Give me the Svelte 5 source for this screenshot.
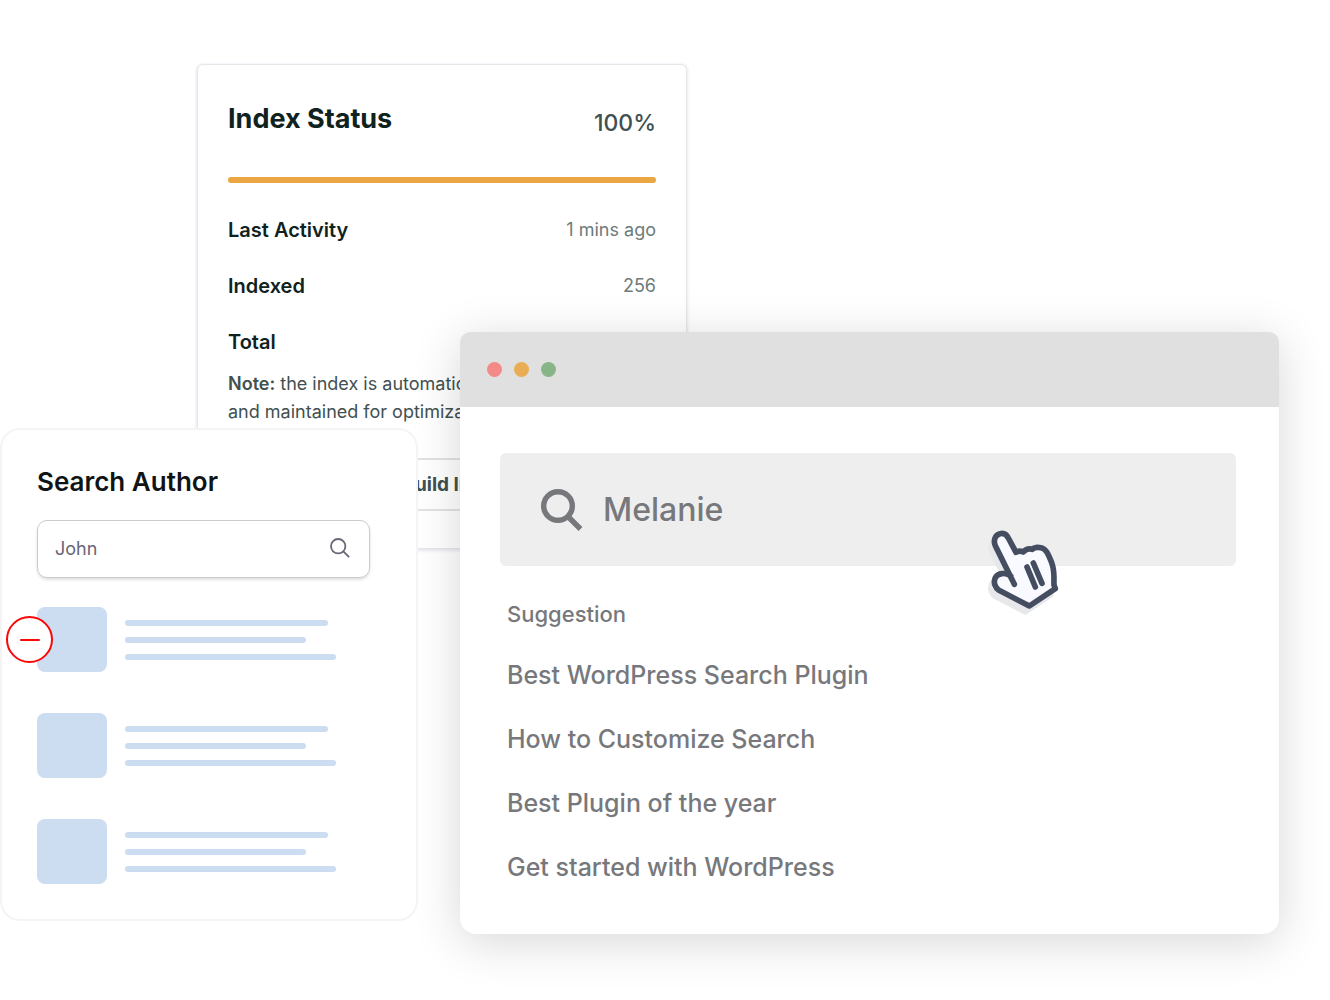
<script>
  const stats = [
    { label: 'Last Activity', value: '1 mins ago' },
    { label: 'Indexed', value: '256' },
    { label: 'Total', value: '256' }
  ];
  const suggestions = [
    'Best WordPress Search Plugin',
    'How to Customize Search',
    'Best Plugin of the year',
    'Get started with WordPress'
  ];
  const results = [1, 2, 3];
  let author = $state('John');
  let query = $state('Melanie');
</script>

<main class="stage">
  <section class="index-card">
    <header class="index-head">
      <h2>Index Status</h2>
      <span class="percent">100%</span>
    </header>
    <div class="progress" role="progressbar" aria-label="Index progress" aria-valuenow="100"></div>
    <dl class="stats">
      {#each stats as stat}
        <div class="stat">
          <dt>{stat.label}</dt>
          <dd>{stat.value}</dd>
        </div>
      {/each}
    </dl>
    <p class="note"><strong>Note:</strong> the index is automatically updated<br />and maintained for optimization.</p>
    <button class="rebuild" type="button">Rebuild Index</button>
  </section>

  <section class="window">
    <div class="titlebar">
      <span class="dot red"></span>
      <span class="dot amber"></span>
      <span class="dot green"></span>
    </div>
    <div class="window-body">
      <div class="search">
        <svg class="search-icon" viewBox="0 0 42 42" aria-hidden="true">
          <circle cx="17" cy="17" r="14.3" />
          <path d="M27 27.5 39.5 40" />
        </svg>
        <input type="text" aria-label="Search" bind:value={query} />
        <svg class="pointer" viewBox="0 0 330 330" aria-hidden="true">
          <path
            class="pointer-shadow"
            transform="translate(-12 19)"
            d="M122 183 77 92C69 76 76 59 90 56C101 53 110 59 115 69L138 112C145 107 154 108 160 111C167 103 178 100 187 103C193 97 203 96 213 98C229 101 236 120 245 143C255 169 251 188 252 210L256 221 178 273 87 226C76 219 69 202 76 188C84 174 106 171 122 183Z"
          />
          <path
            class="pointer-hand"
            d="M133 208 76 92C69 76 76 59 90 56C101 53 110 59 115 69L138 112C145 107 154 108 160 111C167 103 178 100 187 103C193 97 203 96 213 98C229 101 236 120 245 143C255 169 251 188 252 210L256 221 178 273 87 226C76 219 69 202 76 188C84 174 106 171 122 183M171 156 196 216M190 144 216 205"
          />
        </svg>
      </div>
      <h3>Suggestion</h3>
      <ul class="suggestions">
        {#each suggestions as item}
          <li><a href="#search">{item}</a></li>
        {/each}
      </ul>
    </div>
  </section>

  <section class="author-card">
    <h2><label for="author">Search Author</label></h2>
    <div class="field">
      <input id="author" type="text" bind:value={author} />
      <svg viewBox="0 0 20 20" aria-hidden="true">
        <circle cx="8.2" cy="8.2" r="7.2" />
        <path d="m13.6 13.6 5 5" />
      </svg>
    </div>
    <ul class="results">
      {#each results as id}
        <li>
          <span class="thumb"></span>
          <span class="lines">
            <span class="line"></span>
            <span class="line short"></span>
            <span class="line long"></span>
          </span>
          {#if id === 1}
            <button class="remove" type="button" aria-label="Remove"></button>
          {/if}
        </li>
      {/each}
    </ul>
  </section>
</main>

<style>
  :global(body) {
    margin: 0;
    background: #fff;
    font-family: Inter, 'Liberation Sans', sans-serif;
  }
  * {
    box-sizing: border-box;
  }
  h2, h3, p, dl, dd, ul {
    margin: 0;
    padding: 0;
  }
  ul {
    list-style: none;
  }
  input {
    min-width: 0;
    flex: 1;
    padding: 0;
    border: 0;
    outline: 0;
    background: none;
    font-family: inherit;
  }

  .stage {
    display: grid;
    grid-template-columns: 197fr 221fr 42fr 227fr 592fr 51fr;
    align-items: start;
    min-height: 100vh;
    overflow: hidden;
  }
  .stage > section {
    grid-row: 1;
    min-width: 0;
  }

  .index-card {
    grid-column: 2 / 5;
    margin-top: 64px;
    padding: 34px 30px 37px;
    border: 1px solid #e6e7eb;
    border-radius: 6px;
    background: #fff;
    box-shadow: 0 1px 3px 1px #e8e8f2;
  }
  .index-head {
    display: flex;
    justify-content: space-between;
    color: #0f2220;
  }
  .index-head h2 {
    font-size: 27px;
    line-height: 40px;
    font-weight: 700;
  }
  .percent {
    padding-top: 4px;
    color: #415050;
    font-size: 23px;
    line-height: 40px;
    font-weight: 500;
  }
  .progress {
    height: 6px;
    margin: 34px 0 33px;
    border-radius: 3px;
    background: #eaa642;
  }
  .stats {
    display: grid;
    gap: 28px;
  }
  .stat {
    display: flex;
    justify-content: space-between;
    line-height: 28px;
  }
  .stat dt {
    color: #0f2220;
    font-size: 20px;
    font-weight: 600;
  }
  .stat dd {
    color: #6d7b7a;
    font-size: 18px;
  }
  .note {
    margin: 14px 0 32px;
    color: #415050;
    font-size: 18px;
    line-height: 28px;
  }
  .note strong {
    font-weight: 600;
  }
  .rebuild {
    width: 100%;
    height: 53px;
    border: 2px solid #e0e3e3;
    border-radius: 6px;
    background: #fff;
    color: #415050;
    font-family: inherit;
    font-size: 19px;
    font-weight: 700;
  }

  .window {
    grid-column: 4 / 6;
    margin-top: 332px;
    border-radius: 10px 10px 16px 16px;
    background: #fff;
    box-shadow: 0 8px 48px rgba(0, 0, 0, 0.16);
    color: #77787c;
  }
  .titlebar {
    display: flex;
    align-items: center;
    gap: 12px;
    height: 75px;
    padding: 0 27px;
    border-radius: 10px 10px 0 0;
    background: #e0e0e0;
  }
  .dot {
    width: 15px;
    height: 15px;
    border-radius: 50%;
  }
  .red {
    background: #f48a88;
  }
  .amber {
    background: #e8ad55;
  }
  .green {
    background: #87b588;
  }
  .window-body {
    padding: 46px 43px 35px 40px;
  }
  .search {
    position: relative;
    display: flex;
    align-items: center;
    gap: 20px;
    height: 113px;
    padding: 0 41px;
    border-radius: 6px;
    background: #eee;
  }
  .search input {
    height: 60px;
    color: inherit;
    font-size: 32px;
    font-weight: 500;
  }
  .search-icon {
    width: 42px;
    height: 42px;
    fill: none;
    stroke: #77787c;
    stroke-width: 5.4;
  }
  .pointer {
    position: absolute;
    top: 62px;
    right: 156px;
    width: 110px;
    height: 110px;
  }
  .pointer-shadow {
    fill: #e6e8ea;
    stroke: #e6e8ea;
    stroke-width: 14;
    stroke-linejoin: round;
  }
  .pointer-hand {
    fill: #f8faff;
    stroke: #454d61;
    stroke-width: 17;
    stroke-linecap: round;
    stroke-linejoin: round;
  }
  .window-body h3 {
    padding: 32px 7px 0;
    font-size: 22px;
    line-height: 32px;
    font-weight: 500;
  }
  .suggestions {
    padding: 13px 7px 0;
  }
  .suggestions a {
    color: inherit;
    font-size: 25px;
    line-height: 64px;
    font-weight: 500;
    text-decoration: none;
  }

  .author-card {
    grid-column: 1 / 3;
    margin-top: 428px;
    padding: 32px 46px 35px 35px;
    border: 2px solid #f4f4f4;
    border-radius: 20px;
    background: #fff;
    z-index: 1;
  }
  .author-card h2 {
    color: #111414;
    font-size: 26px;
    line-height: 40px;
    font-weight: 600;
  }
  .field {
    display: flex;
    align-items: center;
    height: 58px;
    margin: 18px 0 29px;
    padding: 0 19px 2px 17px;
    border: 1px solid #cbcbcd;
    border-radius: 10px;
    box-shadow: 0 2px 3px rgba(0, 0, 0, 0.12);
  }
  .field input {
    height: 40px;
    color: #6a6476;
    font-size: 18px;
  }
  .field svg {
    width: 20px;
    height: 20px;
    fill: none;
    stroke: #6a6476;
    stroke-width: 1.8;
    stroke-linecap: round;
  }
  .results {
    display: grid;
    gap: 41px;
  }
  .results li {
    position: relative;
    display: flex;
    align-items: center;
    gap: 18px;
  }
  .thumb {
    width: 70px;
    height: 65px;
    border-radius: 8px;
    background: #ccdcf1;
  }
  .lines {
    display: grid;
    gap: 11px;
    flex: 1;
  }
  .line {
    width: 83%;
    height: 6px;
    border-radius: 3px;
    background: #ccdcf1;
  }
  .short {
    width: 74%;
  }
  .long {
    width: 86%;
  }
  .remove {
    position: absolute;
    top: 9px;
    left: -31px;
    display: grid;
    place-items: center;
    width: 47px;
    height: 47px;
    padding: 0;
    border: 2px solid #f80808;
    border-radius: 50%;
    background: #fff;
  }
  .remove::before {
    content: '';
    width: 20px;
    height: 2px;
    border-radius: 1px;
    background: #f80808;
  }
</style>
